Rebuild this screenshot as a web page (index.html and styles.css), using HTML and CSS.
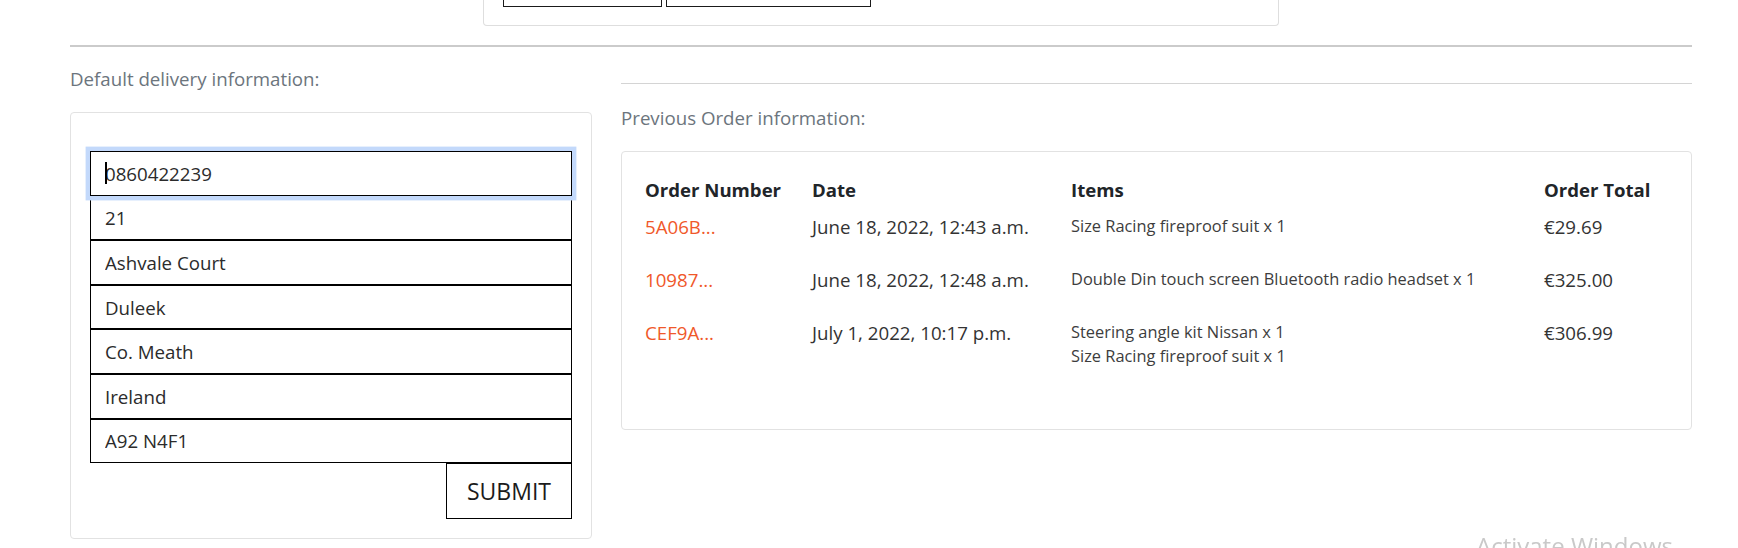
FILE: index.html
```html
<!DOCTYPE html>
<html lang="en">
<head>
<meta charset="utf-8">
<title>Profile</title>
<link rel="stylesheet" href="styles.css">
</head>
<body>
<div class="page">
  <div class="top-card">
    <div class="top-row">
      <span class="top-box box-a"></span>
      <span class="top-box box-b"></span>
    </div>
  </div>
  <hr class="divider">
  <div class="columns">
    <section class="col-left">
      <p class="section-label">Default delivery information:</p>
      <div class="card form-card">
        <form class="delivery-form">
          <div class="field-focus">
            <input class="field focused" type="text" value="0860422239">
            <span class="caret"></span>
          </div>
          <input class="field" type="text" value="21">
          <input class="field" type="text" value="Ashvale Court">
          <input class="field" type="text" value="Duleek">
          <input class="field" type="text" value="Co. Meath">
          <input class="field" type="text" value="Ireland">
          <input class="field" type="text" value="A92 N4F1">
          <div class="form-actions">
            <button class="submit-btn" type="button">SUBMIT</button>
          </div>
        </form>
      </div>
    </section>
    <section class="col-right">
      <hr class="thin-rule">
      <p class="section-label">Previous Order information:</p>
      <div class="card orders-card">
        <table class="orders">
          <colgroup>
            <col class="c-num"><col class="c-date"><col class="c-items"><col class="c-total">
          </colgroup>
          <thead>
            <tr><th>Order Number</th><th>Date</th><th>Items</th><th>Order Total</th></tr>
          </thead>
          <tbody>
            <tr>
              <td><a class="order-link" href="#">5A06B...</a></td>
              <td>June 18, 2022, 12:43 a.m.</td>
              <td class="items"><div>Size Racing fireproof suit x 1</div></td>
              <td>€29.69</td>
            </tr>
            <tr>
              <td><a class="order-link" href="#">10987...</a></td>
              <td>June 18, 2022, 12:48 a.m.</td>
              <td class="items"><div>Double Din touch screen Bluetooth radio headset x 1</div></td>
              <td>€325.00</td>
            </tr>
            <tr>
              <td><a class="order-link" href="#">CEF9A...</a></td>
              <td>July 1, 2022, 10:17 p.m.</td>
              <td class="items"><div>Steering angle kit Nissan x 1</div><div>Size Racing fireproof suit x 1</div></td>
              <td>€306.99</td>
            </tr>
          </tbody>
        </table>
      </div>
    </section>
  </div>
</div>
<div class="watermark">Activate Windows</div>
</body>
</html>
```

FILE: styles.css
```css
* { box-sizing: border-box; }

html, body {
  margin: 0;
  padding: 0;
  background: #fff;
  overflow: hidden;
}

body {
  font-family: "Open Sans", "Liberation Sans", sans-serif;
  font-size: 18.7px;
  line-height: 1.5;
  color: #212529;
}

.page {
  width: 1692px;
  padding-left: 70px;
}

/* partially visible card at the top */
.top-card {
  width: 796px;
  height: 26px;
  margin-left: 413px;
  border: 1px solid #dedede;
  border-top: none;
  border-radius: 0 0 4px 4px;
  padding: 0 19px;
}

.top-row {
  display: flex;
  gap: 4px;
}

.top-box {
  display: block;
  height: 7px;
  border: 1px solid #1a1a1a;
  border-top: none;
}

.box-a { width: 159px; }
.box-b { width: 205px; }

.divider {
  margin: 19px 0 0;
  border: 0;
  border-top: 2px solid #cbcbcb;
  height: 0;
}

.columns {
  display: flex;
  gap: 29px;
}

.col-left { width: 522px; flex: none; }
.col-right { flex: 1; }

.section-label {
  margin: 18px 0 19px;
  color: #6c757d;
  font-size: 18.7px;
  line-height: 28px;
}

.col-right .section-label { margin-top: 20px; }

.thin-rule {
  margin: 36px 0 0;
  border: 0;
  border-top: 1px solid #d4d4d4;
  height: 0;
}

.card {
  border: 1px solid #e2e2e2;
  border-radius: 4px;
  background: #fff;
}

.form-card {
  padding: 38px 19px 19px;
}

.delivery-form {
  display: flex;
  flex-direction: column;
}

.field-focus {
  position: relative;
  display: flex;
  flex-direction: column;
}

.field {
  display: block;
  width: 100%;
  height: 44.6px;
  margin: 0;
  padding: 0 14px;
  border: 1px solid #000;
  border-radius: 0;
  background: #fff;
  font-family: "Open Sans", "Liberation Sans", sans-serif;
  font-size: 18.7px;
  color: #2b2b2b;
  outline: none;
}

.field.focused {
  box-shadow: 0 0 0 4.4px #c3d9fb;
}

.caret {
  position: absolute;
  left: 15px;
  top: 11px;
  width: 1.5px;
  height: 22px;
  background: #000;
}

.form-actions {
  display: flex;
  justify-content: flex-end;
}

.submit-btn {
  width: 126px;
  height: 56px;
  margin: 0;
  padding: 0;
  border: 1px solid #000;
  border-radius: 0;
  background: #fff;
  font-family: "Open Sans", "Liberation Sans", sans-serif;
  font-size: 23px;
  color: #1b1b1b;
}

.orders-card {
  height: 279px;
  padding: 24px 23px 0;
}

.orders {
  width: 100%;
  table-layout: fixed;
  border-collapse: collapse;
}

.c-num { width: 167px; }
.c-date { width: 259px; }
.c-items { width: 473px; }

.orders th {
  text-align: left;
  font-weight: 700;
  font-size: 18.6px;
  line-height: 28px;
  padding: 0 0 9px;
  white-space: nowrap;
  color: #212529;
}

.orders td {
  vertical-align: top;
  padding: 0 0 25px;
  font-size: 18.7px;
  line-height: 28px;
  color: #333;
  white-space: nowrap;
}

.orders td.items {
  font-size: 16.4px;
  line-height: 24px;
  color: #3d3d3d;
  padding-top: 1px;
}

.order-link {
  color: #f0582a;
  text-decoration: none;
}

.watermark {
  position: fixed;
  left: 1476px;
  top: 530px;
  font-family: "Open Sans", "Liberation Sans", sans-serif;
  font-size: 24px;
  line-height: 32px;
  color: #c9c9c9;
  white-space: nowrap;
}
```
